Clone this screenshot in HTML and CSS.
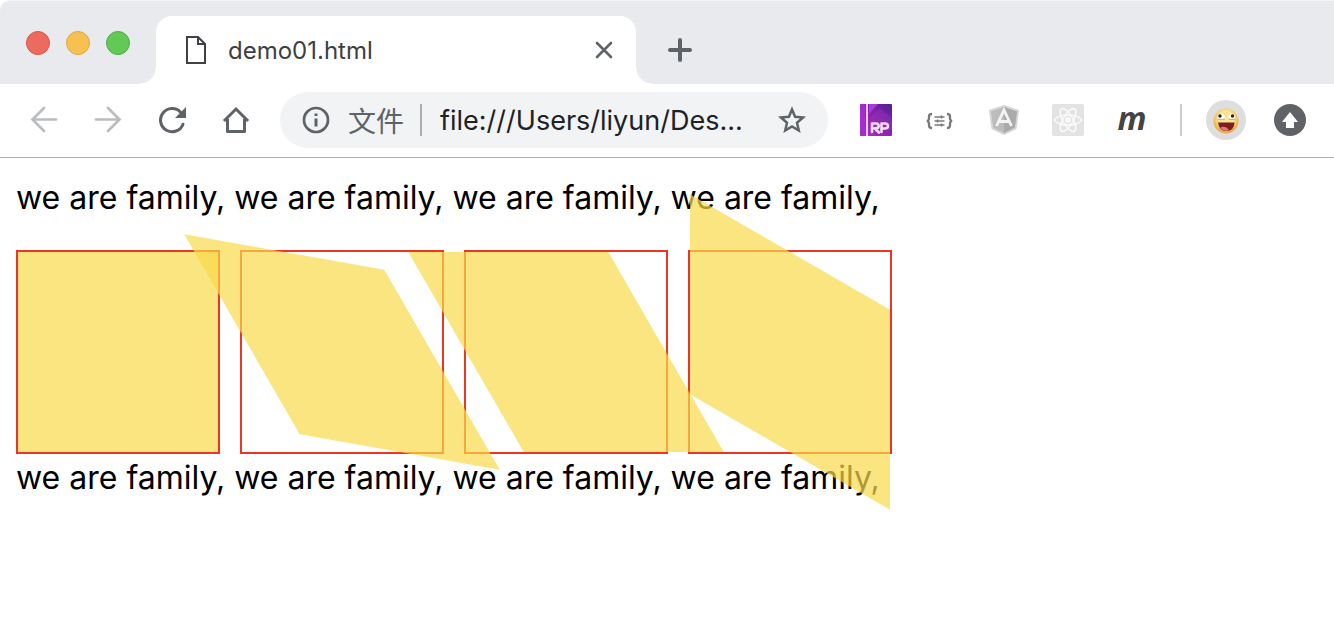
FILE: index.html
```
<!DOCTYPE html>
<html lang="zh-CN">
<head>
<meta charset="utf-8">
<title>demo01.html</title>
<link rel="stylesheet" href="styles.css">
</head>
<body>
<header class="browser">
  <div class="tabstrip">
    <div class="lights">
      <button class="light light-close" aria-label="Close window"></button>
      <button class="light light-min" aria-label="Minimize window"></button>
      <button class="light light-max" aria-label="Maximize window"></button>
    </div>
    <div class="tab">
      <svg class="icon" width="24" height="32" viewBox="0 0 24 32" fill="none" stroke="#3f4144" stroke-width="2"><path d="M3 3H14L21 10V29H3Z"/><path d="M14 3V10H21"/></svg>
      <span class="tab-title">demo01.html</span>
      <button class="plain tab-close" aria-label="Close tab">
        <svg width="24" height="24" viewBox="0 0 24 24" stroke="#5f6368" stroke-width="2.6" stroke-linecap="round"><path d="M5 5L19 19M19 5L5 19"/></svg>
      </button>
    </div>
    <button class="plain new-tab" aria-label="New tab">
      <svg width="28" height="28" viewBox="0 0 28 28" stroke="#5f6368" stroke-width="4" stroke-linecap="round"><path d="M14 4V24M4 14H24"/></svg>
    </button>
  </div>
  <div class="toolbar">
    <nav class="group">
      <button class="plain tool" aria-label="Back">
        <svg width="32" height="32" viewBox="0 0 32 32" fill="none" stroke="#babcbe" stroke-width="2.7" stroke-linecap="round"><path d="M28 15.500H5M16 4L4.500 15.500L16 27"/></svg>
      </button>
      <button class="plain tool" aria-label="Forward">
        <svg width="32" height="32" viewBox="0 0 32 32" fill="none" stroke="#babcbe" stroke-width="2.7" stroke-linecap="round"><path d="M4 15.500H27M16 4L27.500 15.500L16 27"/></svg>
      </button>
      <button class="plain tool" aria-label="Reload">
        <svg width="32" height="32" viewBox="0 0 32 32"><path d="M27 20.200A11.600 11.600 0 1 1 24.600 8.200" fill="none" stroke="#5f6368" stroke-width="3" stroke-linecap="round"/><path d="M30 3V14H19Z" fill="#5f6368"/></svg>
      </button>
      <button class="plain tool" aria-label="Home">
        <svg width="32" height="32" viewBox="0 0 32 32" fill="none" stroke="#5f6368" stroke-width="3" stroke-linejoin="round"><path d="M7.500 15V27.500H24.500V15"/><path d="M5 16L16 5L27 16" stroke-linejoin="miter" stroke-linecap="square"/></svg>
      </button>
    </nav>
    <div class="omnibox">
      <svg class="icon" width="28" height="28" viewBox="0 0 28 28"><circle cx="14" cy="14" r="12" fill="none" stroke="#5f6368" stroke-width="2.7"/><path d="M12.500 7.500H15.500V10H12.500ZM12.500 12.500H15.500V20.500H12.500Z" fill="#5f6368"/></svg>
      <label class="scheme" for="address">文件</label>
      <span class="separator"></span>
      <input class="address" id="address" type="text" value="file:///Users/liyun/Des...">
      <button class="plain star" aria-label="Bookmark this page">
        <svg width="32" height="32" viewBox="0 0 32 32" fill="none" stroke="#5f6368" stroke-width="2.5"><path d="M16 5.500L19.100 12.800L27 13.500L21 18.700L22.800 26.500L16 22.400L9.200 26.500L11 18.700L5 13.500L12.900 12.800Z"/></svg>
      </button>
    </div>
    <div class="group">
      <button class="plain tool" aria-label="Axure RP">
        <svg width="32" height="32" viewBox="0 0 32 32"><defs><linearGradient id="cover" x1="0" y1="1" x2="1" y2="0"><stop offset="0" stop-color="#b02bcb"/><stop offset=".5" stop-color="#8d24ae"/><stop offset="1" stop-color="#4e2192"/></linearGradient></defs><rect width="32" height="32" rx="1" fill="url(#cover)"/><path d="M9 15L20 4L32 14V26H9Z" fill="#a035c6" opacity=".35"/><path d="M9 0H18L9 10Z" fill="#a93bdc"/><path d="M0 0H5V32H0Z" fill="#a62bd0"/><path d="M6 0H8V32H6Z" fill="#e8caf0"/><g fill="none" stroke="#f3dff7" stroke-width="2.6" stroke-linecap="round" stroke-linejoin="round"><path d="M12 28V19.500H16Q18.700 19.500 18.700 22Q18.700 24.300 16 24.300H14.500L19 28.500"/><path d="M21.500 28V19.500H25Q28 19.500 28 22Q28 24.500 25 24.500H23"/></g></svg>
      </button>
      <button class="plain tool" aria-label="JSON viewer">
        <svg width="32" height="32" viewBox="0 0 32 32" fill="none" stroke="#77797b" stroke-width="2.3"><path d="M8 10Q5 10 5 12.500V14.500Q5 16.500 3 17Q5 17.500 5 19.500V21.500Q5 24 8 24M23 10Q26 10 26 12.500V14.500Q26 16.500 28 17Q26 17.500 26 19.500V21.500Q26 24 23 24"/><path d="M10.500 13H20.500M10.500 17H20.500M10.500 21H20.500" stroke-width="1.5"/><path d="M17.500 11.500V14.500M13.500 15.500V18.500M17.500 19.500V22.500" stroke-width="1.5"/></svg>
      </button>
      <button class="plain tool" aria-label="Angular">
        <svg width="32" height="32" viewBox="0 0 32 32"><path d="M16 1L31 6L28.500 25L16 31L3.500 25L1 6Z" fill="#d4d5d6"/><path d="M16 3L29 7.500L26.700 23.500L16 29L5.300 23.500L3 7.500Z" fill="#bcbcbc"/><path d="M16 3L29 7.500L26.700 23.500L16 29Z" fill="#aaa"/><path d="M8.500 22L16 6L23.500 22M11.500 17.500H20.500" fill="none" stroke="#f4f4f4" stroke-width="2.8"/></svg>
      </button>
      <button class="plain tool" aria-label="React">
        <svg width="32" height="32" viewBox="0 0 32 32"><rect width="32" height="32" rx="2" fill="#e3e3e3"/><g fill="none" stroke="#fafafa" stroke-width="1.5"><ellipse cx="16" cy="16" rx="13" ry="5"/><ellipse cx="16" cy="16" rx="13" ry="5" transform="rotate(60 16 16)"/><ellipse cx="16" cy="16" rx="13" ry="5" transform="rotate(120 16 16)"/></g><circle cx="16" cy="16" r="3" fill="#fafafa"/></svg>
      </button>
      <button class="plain tool letter">m</button>
    </div>
    <span class="divider"></span>
    <button class="plain avatar" aria-label="Profile">
      <svg width="26" height="28" viewBox="0 -2 26 28"><defs><radialGradient id="face" cx=".5" cy=".4" r=".6"><stop offset=".5" stop-color="#fbe592"/><stop offset="1" stop-color="#e5a040"/></radialGradient></defs><circle cx="13" cy="13" r="12.500" fill="url(#face)"/><path d="M4.500 11Q5 6 8.500 6Q12 6.500 12 11ZM15.500 11Q15.500 6 19 6Q22 6.500 22.500 11Z" fill="#fff"/><path d="M4.500 11Q8.500 12 12 11M15.500 11Q19 12 22.500 11" fill="none" stroke="#c7a866"/><circle cx="7" cy="8" r="1.700" fill="#222"/><circle cx="19.500" cy="8" r="1.700" fill="#222"/><path d="M5 14.500H21.500Q21 23 13.500 23Q6 23 5 14.500Z" fill="#7d1d20"/><path d="M7 20Q12 16.500 16 22Q12 24 7 20Z" fill="#e8747c"/></svg>
    </button>
    <button class="plain update" aria-label="Update">
      <svg width="32" height="32" viewBox="0 0 32 32"><circle cx="16" cy="16" r="16" fill="#5f6368"/><path d="M16 8L24 18H20V24H12V18H8Z" fill="#fff"/></svg>
    </button>
  </div>
</header>
<main class="page">
  <p class="line line-top">we are family, we are family, we are family, we are family,</p>
  <div class="boxes">
    <div class="box"><div class="fill"></div></div>
    <div class="box"><div class="fill skew-both"></div></div>
    <div class="box"><div class="fill skew-x"></div></div>
    <div class="box"><div class="fill skew-y"></div></div>
  </div>
  <p class="line">we are family, we are family, we are family, we are family,</p>
</main>
</body>
</html>
```
FILE: styles.css
```
* { box-sizing: border-box; }
body { margin: 0; background: #fff; color: #000; font-family: Inter, "Noto Sans CJK SC", sans-serif; }
svg { display: block; }
.icon { flex: none; }
.plain { display: flex; align-items: center; justify-content: center; flex: none; padding: 0; border: 0; background: none; font: inherit; }

.browser { border-bottom: 1px solid #b1b3b5; }
.tabstrip { display: flex; height: 84px; padding: 15px 0 0 26px; background: #e8eaed; border-top: 1px solid #f3f4f5; border-top-left-radius: 10px; }
.lights { display: flex; gap: 16px; padding-top: 15px; margin-right: 26px; }
.light { width: 24px; height: 24px; padding: 0; border: 1px solid; border-radius: 50%; }
.light-close { background: #ed6a5e; border-color: #d8564b; }
.light-min { background: #f6c151; border-color: #dca644; }
.light-max { background: #62c956; border-color: #50ad44; }

.tab { position: relative; display: flex; align-items: center; flex: 0 1 480px; padding: 0 20px 0 28px; background: #fff; border-radius: 16px 16px 0 0; }
.tab::before, .tab::after { content: ""; position: absolute; bottom: 0; width: 16px; height: 16px; }
.tab::before { right: 100%; background: radial-gradient(circle at 0 0, #e8eaed 15px, #fff 16px); }
.tab::after { left: 100%; background: radial-gradient(circle at 100% 0, #e8eaed 15px, #fff 16px); }
.tab-title { flex: 1; margin-left: 20px; font-size: 24px; color: #3c4043; }
.new-tab { margin-left: 30px; width: 28px; }

.toolbar { display: flex; align-items: center; height: 73px; padding: 0 28px 1px 12px; }
.group { display: flex; }
.tool { width: 64px; height: 40px; }
.omnibox { display: flex; align-items: center; flex: 1; min-width: 0; height: 56px; margin: 0 16px 0 12px; padding: 0 20px 0 22px; background: #f1f3f4; border-radius: 28px; }
.scheme { margin: 0 16px 0 18px; font-family: "Noto Sans CJK SC", sans-serif; font-size: 28px; line-height: 40px; color: #5f6368; flex: none; }
.separator { width: 2px; height: 32px; background: #a9acb0; flex: none; }
.address { flex: 1; min-width: 0; margin-left: 18px; padding: 0; border: 0; background: none; font-family: Inter, sans-serif; font-size: 27px; color: #202124; outline: none; }
.letter { padding-bottom: 4px; font-family: "Open Sans", sans-serif; font-size: 32px; line-height: 36px; font-weight: 700; font-style: italic; color: #444; }
.divider { width: 2px; height: 32px; margin: 0 24px 0 16px; background: #ccc; flex: none; }
.avatar { width: 40px; height: 40px; border-radius: 50%; background: #dedede; }
.update { margin-left: 28px; }

.page { padding: 18px 16px; }
.line { margin: 0; font-size: 32px; line-height: 44px; }
.line-top { margin-bottom: 30px; }
.boxes { display: flex; flex-wrap: wrap; gap: 20px; margin-bottom: 2px; }
.box { width: 204px; height: 204px; border: 2px solid #ee3424; }
.fill { height: 100%; background: #f8da4a; opacity: .7; }
.skew-both { transform: skew(30deg, 10deg); }
.skew-x { transform: skewX(30deg); }
.skew-y { transform: skewY(30deg); }
```
